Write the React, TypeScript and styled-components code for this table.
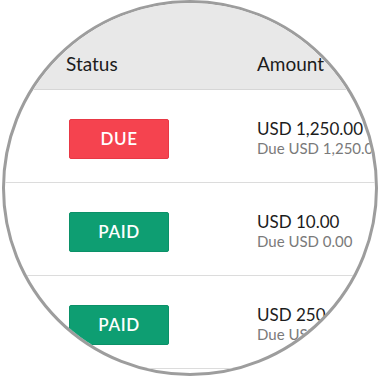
import styled, { createGlobalStyle } from "styled-components";

const GlobalStyle = createGlobalStyle`
  html, body {
    margin: 0;
    padding: 0;
    background: #ffffff;
  }
  body {
    font-family: "Lato", "Noto Sans", sans-serif;
    color: #1c1c1c;
  }
`;

type Status = "due" | "paid";

interface Invoice {
  status: Status;
  amount: string;
  due: string;
}

const invoices: Invoice[] = [
  { status: "due", amount: "USD 1,250.00", due: "Due USD 1,250.00" },
  { status: "paid", amount: "USD 10.00", due: "Due USD 0.00" },
  { status: "paid", amount: "USD 250.00", due: "Due USD 0.00" },
];

export default function App() {
  return (
    <>
      <GlobalStyle />
      <Lens>
        <Table>
          <HeaderRow>
            <HeaderCell>Status</HeaderCell>
            <HeaderCell>Amount</HeaderCell>
          </HeaderRow>
          {invoices.map((inv, i) => (
            <Row key={i}>
              <BadgeCell>
                <Badge $status={inv.status}>{inv.status.toUpperCase()}</Badge>
              </BadgeCell>
              <AmountCell>
                <Amount>{inv.amount}</Amount>
                <DueAmount>{inv.due}</DueAmount>
              </AmountCell>
            </Row>
          ))}
        </Table>
      </Lens>
    </>
  );
}

const Lens = styled.div`
  box-sizing: border-box;
  width: 376px;
  height: 376px;
  margin-left: 2px;
  border: 3px solid #9d9d9d;
  border-radius: 50%;
  overflow: hidden;
  background: #ffffff;
`;

const Table = styled.div`
  width: 520px;
  display: flex;
  flex-direction: column;
`;

const HeaderRow = styled.div`
  display: grid;
  grid-template-columns: 252px 1fr;
  height: 87px;
  background: #e8e8e8;
  border-bottom: 1px solid #d6d6d6;
  align-items: end;
  padding-bottom: 14px;
  box-sizing: border-box;
`;

const HeaderCell = styled.div`
  font-size: 19px;
  line-height: 23px;
  color: #1c1c1c;
  &:first-child {
    padding-left: 61px;
  }
`;

const Row = styled.div`
  display: grid;
  grid-template-columns: 252px 1fr;
  height: 93px;
  box-sizing: border-box;
  border-bottom: 1px solid #dcdcdc;
  align-items: center;
  padding-top: 5px;
`;

const BadgeCell = styled.div`
  padding-left: 64px;
`;

const Badge = styled.div<{ $status: Status }>`
  box-sizing: border-box;
  width: 100px;
  height: 40px;
  display: flex;
  align-items: center;
  justify-content: center;
  border-radius: 2px;
  font-size: 17px;
  font-weight: 600;
  letter-spacing: 0.6px;
  color: #ffffff;
  background: ${(p) => (p.$status === "due" ? "#f5434f" : "#0e9e72")};
  border: 1px solid ${(p) => (p.$status === "due" ? "#e83845" : "#0b9168")};
`;

const AmountCell = styled.div`
  display: flex;
  flex-direction: column;
`;

const Amount = styled.div`
  font-size: 17px;
  line-height: 20px;
  color: #1c1c1c;
  white-space: nowrap;
`;

const DueAmount = styled.div`
  font-size: 15px;
  line-height: 19px;
  color: #7a7a7a;
  white-space: nowrap;
`;
